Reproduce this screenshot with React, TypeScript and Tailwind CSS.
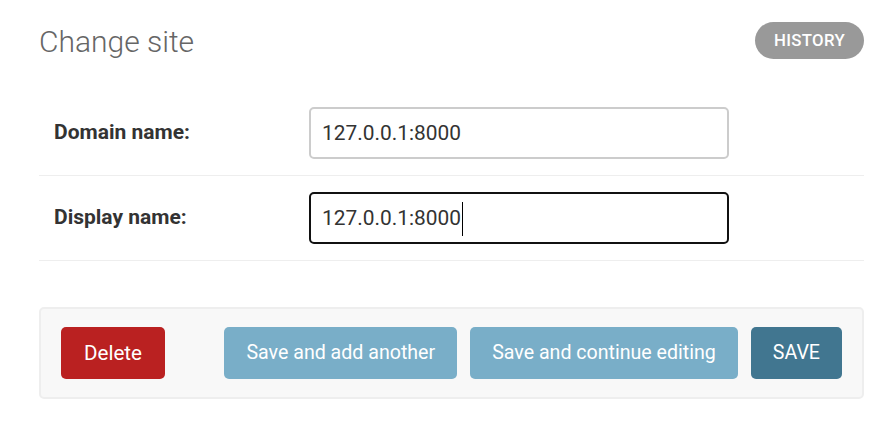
import React from "react";

const font = { fontFamily: "Roboto, 'Noto Sans', sans-serif" };

function FieldRow({
  label,
  value,
  focused,
}: {
  label: string;
  value: string;
  focused?: boolean;
}) {
  return (
    <div className="flex items-center border-b border-[#eee] py-4">
      <label className="w-[270px] pl-[15px] text-[21px] font-bold text-[#333]">
        {label}
      </label>
      <div
        className={
          "flex h-[52px] w-[420px] items-center rounded-[5px] border-2 pl-[11px] pt-[2px] text-[20.9px] text-[#333] " +
          (focused ? "border-[#111]" : "border-[#ccc]")
        }
      >
        <span>{value}</span>
        {focused && <span className="ml-px inline-block h-[34px] w-px bg-black" />}
      </div>
    </div>
  );
}

export default function App() {
  return (
    <div className="min-h-screen bg-white pl-[39px] pr-[32px] pt-[22px]" style={font}>
      <div className="flex h-[37px] items-center justify-between">
        <h1 className="pt-[2px] text-[30px] font-light text-[#666]">Change site</h1>
        <a
          href="#"
          className="flex h-[37px] items-center rounded-full bg-[#999] px-[19px] text-[16.8px] font-medium uppercase tracking-[0.3px] text-white"
        >
          History
        </a>
      </div>

      <form className="mt-[32px]">
        <FieldRow label="Domain name:" value="127.0.0.1:8000" />
        <FieldRow label="Display name:" value="127.0.0.1:8000" focused />

        <div className="mt-[46px] flex items-center justify-between rounded-[5px] border-2 border-[#eee] bg-[#f8f8f8] px-[20px] py-[18px]">
          <button
            type="button"
            className="h-[52px] rounded-[5px] bg-[#ba2121] px-[23px] text-[20.6px] text-white"
          >
            Delete
          </button>
          <div className="flex gap-[13px]">
            <button
              type="button"
              className="h-[52px] rounded-[5px] bg-[#79aec8] px-[22px] text-[19.6px] text-white"
            >
              Save and add another
            </button>
            <button
              type="button"
              className="h-[52px] rounded-[5px] bg-[#79aec8] px-[22px] text-[19.6px] text-white"
            >
              Save and continue editing
            </button>
            <button
              type="button"
              className="h-[52px] rounded-[5px] bg-[#417690] px-[22px] text-[19.6px] uppercase text-white"
            >
              Save
            </button>
          </div>
        </div>
      </form>
    </div>
  );
}
